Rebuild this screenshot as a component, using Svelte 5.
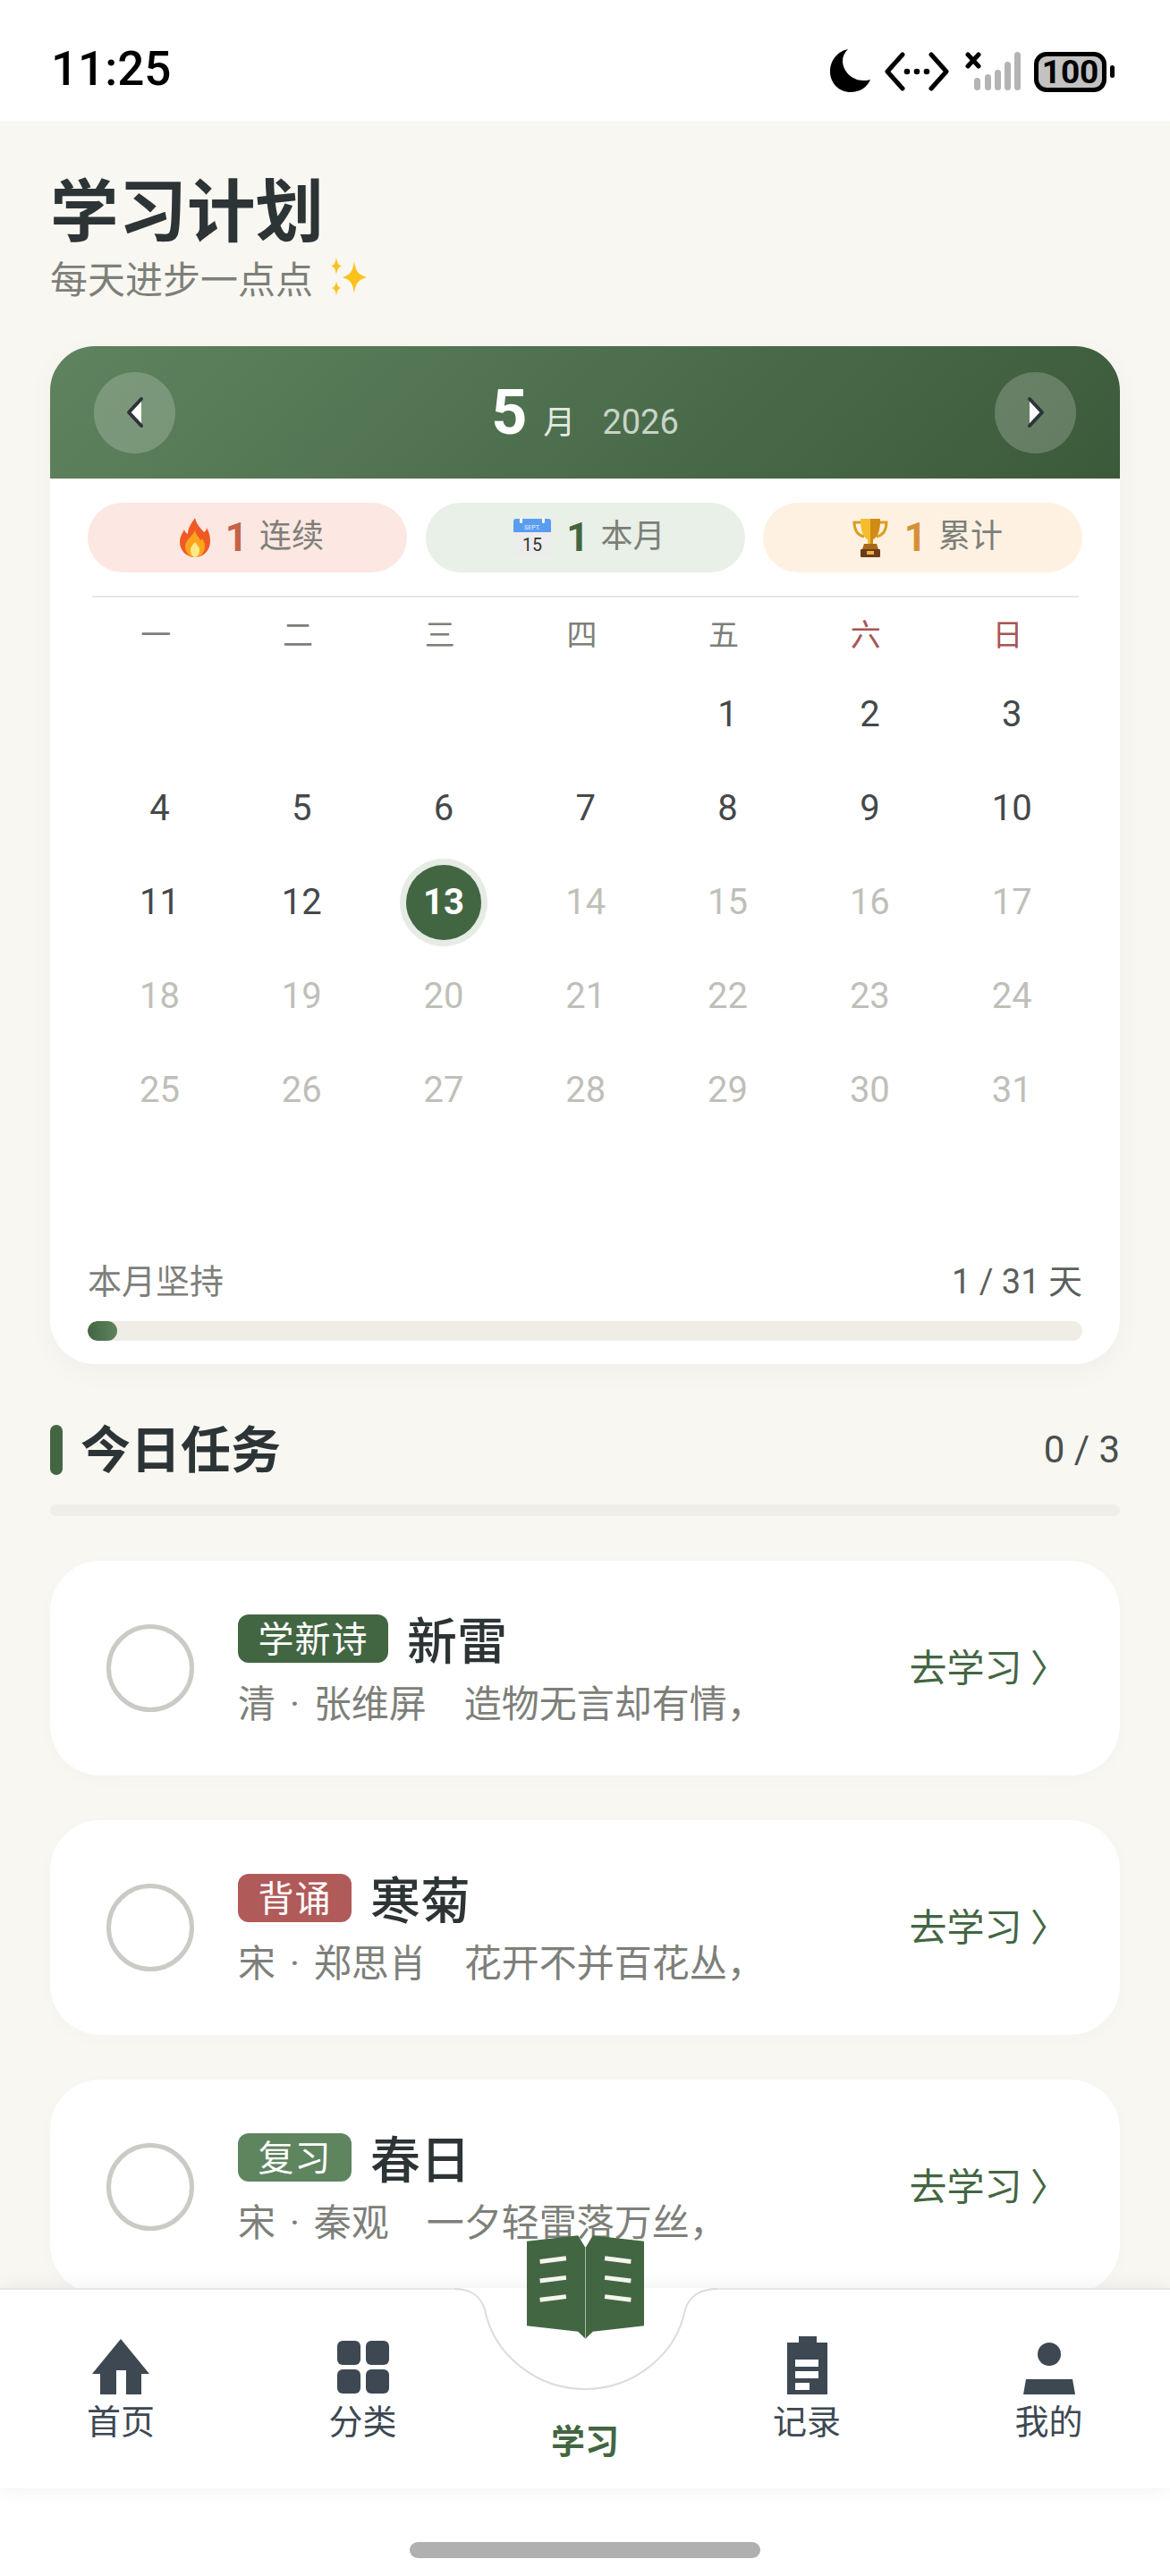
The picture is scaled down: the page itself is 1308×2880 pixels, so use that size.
<script>
  const weekdays = ['一', '二', '三', '四', '五', '六', '日'];
  const blanks = [0, 1, 2, 3];
  const days = Array.from({ length: 31 }, (_, i) => i + 1);
  const tasks = [
    { tag: '学新诗', tone: 'new', name: '新雷', sub: '清 · 张维屏　造物无言却有情，' },
    { tag: '背诵', tone: 'recite', name: '寒菊', sub: '宋 · 郑思肖　花开不并百花丛，' },
    { tag: '复习', tone: 'review', name: '春日', sub: '宋 · 秦观　一夕轻雷落万丝，' }
  ];
</script>

<div class="phone">
  <header class="status">
    <span class="time">11:25</span>
    <div class="status-icons">
      <svg class="moon" viewBox="0 0 46 48" width="46" height="48"><path fill="#000" d="M21 0C11 2 1 11 1 25c0 13 10 23 23 23 10 0 18-5 22-14-3 1-5 1-8 1C25 35 15 24 15 13c0-5 2-9 6-13z"/></svg>
      <svg class="link" viewBox="0 0 72 44" width="72" height="44"><path fill="none" stroke="#000" stroke-width="5" stroke-linecap="round" stroke-linejoin="round" d="M20 3 3 22l17 19M52 3l17 19-17 19"/><circle cx="25" cy="22" r="3.3"/><circle cx="36" cy="22" r="3.3"/><circle cx="47" cy="22" r="3.3"/></svg>
      <svg class="signal" viewBox="0 0 62 44" width="62" height="44"><path stroke="#000" stroke-width="5" stroke-linecap="round" d="M3 3l12 13M15 3 3 16"/><g fill="#b4b4b4"><rect x="10" y="29" width="7" height="14" rx="3.5"/><rect x="22" y="25" width="7" height="18" rx="3.5"/><rect x="33" y="20" width="7" height="23" rx="3.5"/><rect x="44" y="11" width="7" height="32" rx="3.5"/><rect x="55" y="0" width="7" height="43" rx="3.5"/></g></svg>
      <div class="battery"><span>100</span></div>
      <i class="nub"></i>
    </div>
  </header>

  <main class="content">
    <h1>学习计划</h1>
    <p class="subtitle">每天进步一点点
      <svg viewBox="0 0 46 44" width="46" height="44" class="spark"><g fill="#fcc21b"><path d="M30 4c1.500 11 4 15 14 18-10 3-12.500 7-14 18-1.500-11-4-15-13-18 9-3 11.500-7 13-18z"/><path d="M10 0c1 6 2 8 6 9.500-4 1.500-5 3.500-6 9.500-1-6-2-8-6-9.500C8 8 9 6 10 0z"/><path d="M10 26c.8 5 2 7 5 8-3 1-4.200 3-5 9-.8-6-2-8-5-9 3-1 4.200-3 5-8z"/></g></svg>
    </p>

    <section class="calendar">
      <div class="cal-head">
        <button class="nav-btn" aria-label="上一月"><svg viewBox="0 0 20 36" width="20" height="36"><path fill="#fff" d="M17 3v30L3 18z"/><path fill="none" stroke="#2d3436" stroke-width="4" stroke-linecap="round" stroke-linejoin="round" d="M17 3 3 18l14 15"/></svg></button>
        <div class="month"><b>5</b><span class="m">月</span><span class="y">2026</span></div>
        <button class="nav-btn" aria-label="下一月"><svg viewBox="0 0 20 36" width="20" height="36"><path fill="#fff" d="M3 3v30l14-15z"/><path fill="none" stroke="#2d3436" stroke-width="4" stroke-linecap="round" stroke-linejoin="round" d="M3 3l14 15L3 33"/></svg></button>
      </div>

      <div class="pills">
        <div class="pill fire">
          <svg viewBox="0 0 34 44" width="34" height="44"><path fill="#ef5a24" d="M17 0c2 8 6 11 10 16 2-1 3-3 3-5 3 5 4 10 4 15 0 10-7 18-17 18S0 36 0 27c0-6 3-10 5-14 1 3 2 4 4 5 0-7 4-12 8-18z"/><path fill="#fba51c" d="M17 14c1 5 4 7 6 11 1 0 2-1 2-2 2 3 3 6 3 9 0 7-5 12-11 12S6 39 6 32c0-7 8-11 11-18z"/><path fill="#ffe98a" d="M17 27c2 3 5 5 5 9 0 4-2 8-5 8s-5-4-5-8c0-4 3-6 5-9z"/></svg>
          <b>1</b><span>连续</span>
        </div>
        <div class="pill month-pill">
          <svg viewBox="0 0 42 44" width="42" height="44"><rect y="1" width="42" height="43" rx="3" fill="#ececec"/><path fill="#5a9df0" d="M3 1h36a3 3 0 0 1 3 3v12H0V4a3 3 0 0 1 3-3z"/><rect x="7" y="0" width="3" height="6" rx="1.500" fill="#fff"/><rect x="32" y="0" width="3" height="6" rx="1.500" fill="#fff"/><text x="21" y="13" text-anchor="middle" font-size="7" fill="#e8f2ff" font-family="Roboto, sans-serif">SEPT.</text><text x="21" y="37" text-anchor="middle" font-size="21" fill="#333" font-family="Roboto, sans-serif" textLength="22" lengthAdjust="spacingAndGlyphs">15</text></svg>
          <b>1</b><span>本月</span>
        </div>
        <div class="pill trophy">
          <svg viewBox="0 0 42 44" width="42" height="44"><path fill="none" stroke="#d9a020" stroke-width="3" d="M11 5H3c0 8 3 14 11 16M31 5h8c0 8-3 14-11 16"/><path fill="#f5bd2d" d="M10 1h22c0 12-2 20-8 23v5h-6v-5C12 21 10 13 10 1z"/><path fill="#d08a16" d="M24 1h8c0 12-2 20-8 23v5h-3V1z"/><path fill="#a8681a" d="M14 29h14l2 6H12z"/><rect x="10" y="35" width="22" height="9" rx="1" fill="#6e3b17"/><rect x="17" y="37" width="8" height="4" fill="#e8b540"/></svg>
          <b>1</b><span>累计</span>
        </div>
      </div>

      <div class="divider"></div>

      <div class="weekdays">
        {#each weekdays as d, i}
          <span class:weekend={i > 4}>{d}</span>
        {/each}
      </div>

      <div class="days">
        {#each blanks as b}<span></span>{/each}
        {#each days as d}
          <span class:past={d <= 12} class:future={d > 13} class:today={d === 13}><em>{d}</em></span>
        {/each}
      </div>

      <div class="progress-label"><span>本月坚持</span><span class="count">1 / 31 天</span></div>
      <div class="track"><div class="fill" style="width: {(1 / 31) * 100 * 0.5}%"></div></div>
    </section>

    <div class="section-head">
      <i class="accent"></i>
      <h2>今日任务</h2>
      <span>0 / 3</span>
    </div>
    <div class="section-rule"></div>

    {#each tasks as t}
      <article class="task">
        <i class="check"></i>
        <div class="task-body">
          <div class="task-title"><span class="tag {t.tone}">{t.tag}</span><strong>{t.name}</strong></div>
          <p>{t.sub}</p>
        </div>
        <a class="go" href="#go">去学习 〉</a>
      </article>
    {/each}
  </main>

  <nav class="tabbar">
    <svg class="notch" viewBox="0 0 1308 120" width="1308" height="120"><path fill="#fff" d="M512 0h284v120H512z"/><path fill="none" stroke="#dcdcdc" stroke-width="2" d="M508 1C530 1 538 12 542 24 552 75 600 113 654 113 708 113 756 75 766 24 770 12 780 1 802 1"/></svg>
    <svg class="book" viewBox="146 88 394 348" width="131" height="116"><path fill="#436642" d="M146 108 318 88l25 42 25-42 172 20v284l-172 20-25 24-25-24-172-20z"/><path stroke="#a9bba8" stroke-width="3" d="M343 130v306"/><g stroke="#f5f5ef" stroke-width="15"><path d="M190 176l88-11M190 241l88-11M190 305l88-11M408 165l88 11M408 230l88 11M408 294l88 11"/></g></svg>

    <a class="tab" href="#home">
      <svg viewBox="0 0 64 62" width="64" height="62"><path fill="#3d4852" d="M32 0 64 39h-9v23H38V35H27v27H9V39H0z"/></svg>
      <span>首页</span>
    </a>
    <a class="tab" href="#cat">
      <svg viewBox="0 0 58 60" width="58" height="60"><g fill="#3d4852"><rect width="26" height="27" rx="6"/><rect x="32" width="26" height="27" rx="6"/><rect y="32" width="26" height="27" rx="6"/><rect x="32" y="32" width="26" height="27" rx="6"/></g></svg>
      <span>分类</span>
    </a>
    <a class="tab center" href="#learn"><span>学习</span></a>
    <a class="tab" href="#log">
      <svg viewBox="0 0 45 65" width="45" height="65"><path fill="#3d4852" d="M13 0h20v7h12v58H0V7h13z"/><g fill="#fff"><rect x="9" y="26" width="26" height="8"/><rect x="9" y="39" width="26" height="8"/><rect x="9" y="52" width="16" height="8"/></g></svg>
      <span>记录</span>
    </a>
    <a class="tab" href="#me">
      <svg viewBox="0 0 58 65" width="58" height="65"><g fill="#3d4852"><ellipse cx="29" cy="20" rx="13" ry="13"/><path d="M3 48h52l3 17H0z"/></g></svg>
      <span>我的</span>
    </a>
  </nav>
  <div class="home-area"><i></i></div>
</div>

<style>
  :global(body) { margin: 0; background: #fff; }
  * { box-sizing: border-box; }
  .phone {
    width: 1308px; height: 2880px; overflow: hidden; position: relative;
    display: flex; flex-direction: column; background: #f8f7f2;
    font-family: "Noto Sans CJK SC", Roboto, sans-serif; color: #2d3436;
  }
  .status {
    height: 136px; flex: none; background: #fff; display: flex; align-items: flex-start;
    justify-content: space-between; padding: 45px 62px 0 57px;
  }
  .time { font: 500 53px/64px Roboto, sans-serif; color: #000; }
  .status-icons { display: flex; align-items: flex-start; padding-top: 10px; }
  .moon { margin-right: 16px; }
  .link { margin: 3px 18px 0 0; }
  .signal { margin: 3px 15px 0 0; }
  .battery {
    width: 81px; height: 45px; border: 5px solid #000; border-radius: 14px; background: #c2c2c2;
    display: flex; align-items: center; justify-content: center;
    margin-top: 3px;
  }
  .battery span { font: 700 37px/1 Roboto, sans-serif; color: #000; }
  .nub { width: 5px; height: 14px; background: #000; border-radius: 3px; margin: 18px 0 0 4px; }

  .content { flex: 1; min-height: 0; overflow: hidden; padding: 53px 56px 0; }
  h1 { margin: 0; font-size: 76.5px; line-height: 84px; font-weight: 700; color: #2d3436; }
  .subtitle { margin: 12px 0 0; font-size: 42px; line-height: 50px; color: #7d7f79; display: flex; align-items: center; gap: 16px; }
  .spark { flex: none; }

  .calendar {
    margin-top: 52px; height: 1138px; background: #fff; border-radius: 50px; overflow: hidden;
    box-shadow: 0 8px 30px rgba(0, 0, 0, .04); padding-bottom: 27px;
  }
  .cal-head {
    height: 148px; display: flex; align-items: center; justify-content: space-between; padding: 0 49px;
    background: linear-gradient(135deg, #5f835f, #3b5a3a);
  }
  .nav-btn {
    width: 91px; height: 91px; border-radius: 50%; border: 0; padding: 0; background: rgba(255, 255, 255, .2);
    display: flex; align-items: center; justify-content: center;
  }
  .month { display: flex; align-items: baseline; color: #fff; }
  .month b { font: 700 70px/84px Roboto, sans-serif; }
  .m { font-size: 36px; margin-left: 18px; opacity: .85; }
  .y { font: 400 38px/1 Roboto, sans-serif; margin-left: 30px; opacity: .7; }

  .pills { display: grid; grid-template-columns: repeat(3, 357px); justify-content: space-between; margin: 27px 42px 0; }
  .pill { height: 78px; border-radius: 39px; display: flex; align-items: center; justify-content: center; padding-left: 10px; }
  .pill svg { margin-right: 17px; }
  .pill b { font: 700 44px/1 Roboto, sans-serif; margin-right: 13px; }
  .pill span { font-size: 36px; line-height: 44px; color: #7d7f79; transform: translateY(-5px); }
  .fire { background: #fce7e2; }
  .fire b { color: #c4624a; }
  .month-pill { background: #e8f0e7; }
  .month-pill b { color: #436642; }
  .trophy { background: #fff1e2; }
  .trophy b { color: #d68f3a; }

  .divider { height: 2px; margin: 26px 46px 0 47px; background: #e8e7e0; }
  .weekdays { display: grid; grid-template-columns: repeat(7, 158.700px); margin: 12px 0 0 39px; height: 56px; align-items: center; }
  .weekdays span { text-align: center; font-size: 34px; line-height: 56px; color: #7d7f79; }
  .weekdays .weekend { color: #a85555; }
  .days { display: grid; grid-template-columns: repeat(7, 158.800px); grid-auto-rows: 105px; margin: 10px 0 0 43px; height: 630px; }
  .days span { display: flex; align-items: center; justify-content: center; }
  .days em { font: 400 40px/1 Roboto, sans-serif; font-style: normal; color: #bfbfba; }
  .days .past em { color: #45484a; }
  .days .today em {
    width: 84px; height: 84px; border-radius: 50%; background: #436642; color: #fff; font-weight: 700;
    display: flex; align-items: center; justify-content: center; box-shadow: 0 0 0 7px #e6ece5;
  }
  .progress-label { display: flex; justify-content: space-between; padding: 0 42px; margin-top: 28px; font-size: 38px; line-height: 56px; color: #7d7f79; }
  .progress-label span:first-child { transform: translateY(-2px); }
  .count { font-family: Roboto, "Noto Sans CJK SC", sans-serif; color: #5b5f5c; transform: translateY(1px); }
  .track { height: 22px; margin: 17px 42px 0; border-radius: 11px; background: #efede5; overflow: hidden; }
  .fill { height: 100%; min-width: 33px; border-radius: 11px; background: linear-gradient(90deg, #436642, #5f835f); }

  .section-head { display: flex; align-items: center; height: 62px; margin-top: 65px; }
  .accent { width: 14px; height: 56px; border-radius: 7px; background: #436642; margin-right: 20px; }
  h2 { margin: 0; font-size: 56px; line-height: 62px; font-weight: 700; flex: 1; transform: translateY(-4px); }
  .section-head span { font: 400 42px/1 Roboto, sans-serif; color: #4a4f4d; }
  .section-rule { height: 13px; margin-top: 30px; border-radius: 7px; background: #efeee9; }

  .task {
    height: 240px; margin-top: 50px; background: #fff; border-radius: 56px; display: flex; align-items: center;
    padding: 0 82px 0 63px; box-shadow: 0 4px 20px rgba(0, 0, 0, .02);
  }
  .check { flex: none; width: 98px; height: 98px; border-radius: 50%; border: 5px solid #c9cbc4; margin-right: 49px; }
  .task-body { flex: 1; min-width: 0; padding-top: 5px; }
  .task-title { display: flex; align-items: center; height: 56px; }
  .tag { height: 54px; padding: 0 22.500px; border-radius: 12px; color: #fff; font-size: 40px; line-height: 50px; letter-spacing: 1px; margin-right: 21px; }
  .new { background: #436642; }
  .recite { background: #b15a5a; }
  .review { background: #5f855f; }
  .task-title strong { font-size: 56px; line-height: 56px; font-weight: 500; color: #2d3436; transform: translateY(-1px); }
  .task-body p { margin: 21px 0 0; font-family: Roboto, "Noto Sans CJK SC", sans-serif; font-size: 42px; line-height: 50px; word-spacing: 5.500px; color: #7d7f79; white-space: nowrap; }
  .go { flex: none; font-size: 42px; color: #436642; text-decoration: none; margin: -8px -24px 0 0; }

  .tabbar {
    flex: none; height: 224px; position: relative; z-index: 2; background: #fff;
    display: grid; grid-template-columns: 270px 271px 226px 270px 1fr;
    border-top: 2px solid #e8e8e6; box-shadow: 0 0 22px rgba(0, 0, 0, .07);
  }
  .notch { position: absolute; left: 0; top: -2px; }
  .book { position: absolute; left: 589px; top: -61px; }
  .tab {
    position: relative; display: flex; flex-direction: column; align-items: center; justify-content: flex-end;
    height: 167px; text-decoration: none; color: #3d4852; font-size: 38px; line-height: 44px;
  }
  .tab svg { margin-bottom: 6px; }
  .center { height: 189px; color: #436642; font-weight: 700; }
  .home-area { flex: none; height: 98px; background: #fff; display: flex; justify-content: center; padding-top: 60px; }
  .home-area i { width: 392px; height: 18px; border-radius: 9px; background: #b0b0b0; }
</style>
